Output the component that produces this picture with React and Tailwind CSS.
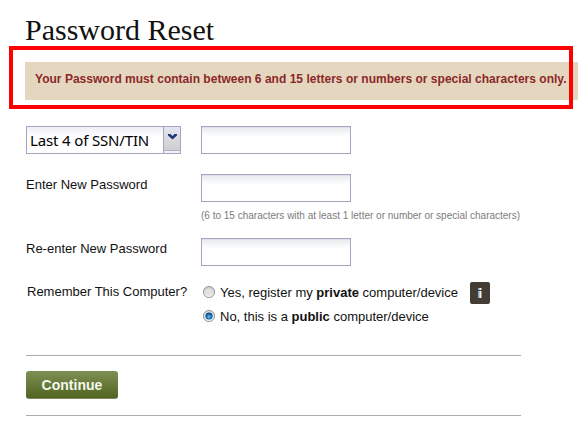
import { useState } from 'react';

const FIELD = 'block w-[150px] h-7 border border-[#a5a5c0] px-1 text-sm outline-none bg-[linear-gradient(to_bottom,#d6d8e4_0px,#eaecef_1px,#f3f4f6_5px,#ffffff_10px)]';

const DEVICES = [
  { id: 'private', before: 'Yes, register my ', after: ' computer/device' },
  { id: 'public', before: 'No, this is a ', after: ' computer/device' },
];

function Radio({ checked }) {
  return (
    <svg width="14" height="13" viewBox="0 0 14 13" className="shrink-0">
      <defs>
        <linearGradient id="ring" x1="0" y1="0" x2="0" y2="1">
          <stop offset="0" stopColor="#c4c4c4" />
          <stop offset="1" stopColor="#f7f7f7" />
        </linearGradient>
        <radialGradient id="dot" cx="0.5" cy="0.6" r="0.6">
          <stop offset="0" stopColor="#6cc4f6" />
          <stop offset="0.5" stopColor="#1d76bd" />
          <stop offset="1" stopColor="#0b2a52" />
        </radialGradient>
      </defs>
      <circle cx="7" cy="6" r="5.6" fill="url(#ring)" stroke="#8f8f8f" strokeWidth="0.9" />
      {checked ? (
        <>
          <circle cx="7" cy="6" r="4.6" fill="#e3edf6" />
          <circle cx="7" cy="6" r="3.6" fill="url(#dot)" />
        </>
      ) : (
        <circle cx="7" cy="6" r="3.6" fill="#e2e2e2" />
      )}
    </svg>
  );
}

export default function App() {
  const [device, setDevice] = useState('public');

  return (
    <div className="relative w-[578px] h-[422px] overflow-hidden bg-white text-[#111111] font-['Liberation_Sans',Arial,sans-serif]">
      <h1 className="pt-[12px] h-[62px] pl-[25px] text-[30px] leading-[36px] font-['Liberation_Serif',serif] whitespace-nowrap">
        Password Reset
      </h1>

      <div className="ml-[25px] h-[38px] pl-[10px] bg-[#e5d7bf]">
        <p className="pt-[9px] text-[12px] leading-4 tracking-[0.02px] font-bold text-[#8b2829] whitespace-nowrap">
          Your Password must contain between 6 and 15 letters or numbers or special characters only.
        </p>
      </div>
      {/* Highlight frame over the error banner */}
      <div className="absolute left-[9px] top-[46px] w-[564px] h-[63px] border-4 border-[#ff0000] pointer-events-none" />

      <div className="ml-[26px] w-[495px] pt-[26px] text-[13px] leading-4">
        <div className="flex h-12">
          <div className="w-[175px] shrink-0">
            <button className="flex w-[155px] h-7 border border-[#a5a5c0] bg-[linear-gradient(to_bottom,#eeeff3_0px,#ffffff_10px)] text-black">
              <span className="flex-1 pl-[3px] text-left text-[15px] leading-[26px] tracking-[-0.15px] whitespace-nowrap font-['Noto_Sans',sans-serif]">
                Last 4 of SSN/TIN
              </span>
              <span className="flex w-[17px] h-[26px] justify-center border-l border-[#a5a5c0] bg-[linear-gradient(to_bottom,#e4e5ef,#cfcfcf_23px,#b0b0c4_23px,#b0b0c4_24px,#f0f0f6_24px)]">
                <svg width="9" height="6" viewBox="0 0 9 6" className="mt-[7px]">
                  <path d="M0 0h2.4l2.1 2 2.1-2H9v1.4L4.5 5.4 0 1.4z" fill="#203580" />
                </svg>
              </span>
            </button>
          </div>
          <input className={FIELD} />
        </div>

        <div className="flex h-16">
          <label className="w-[175px] shrink-0 pt-[3px]">Enter New Password</label>
          <div>
            <input type="password" className={FIELD} />
            <p className="mt-1.5 text-[10px] leading-4 text-[#7c7c7c] whitespace-nowrap">
              (6 to 15 characters with at least 1 letter or number or special characters)
            </p>
          </div>
        </div>

        <div className="flex h-[42px]">
          <label className="w-[175px] shrink-0 pt-[3px]">Re-enter New Password</label>
          <input type="password" className={FIELD} />
        </div>

        <div className="flex h-[75px]">
          <span className="w-[176px] shrink-0 pl-px pt-1">Remember This Computer?</span>
          <div>
            {DEVICES.map((d) => (
              <button key={d.id} onClick={() => setDevice(d.id)} className="flex h-6 items-center whitespace-nowrap">
                <Radio checked={device === d.id} />
                <span className="ml-1 pt-[2px]">
                  {d.before}<b>{d.id}</b>{d.after}
                </span>
              </button>
            ))}
          </div>
          <div className="ml-3 mt-[2px] flex w-5 h-[22px] shrink-0 items-center justify-center rounded-[2px] bg-[#443d35]">
            <svg width="4" height="10" viewBox="0 0 4 10">
              <path d="M0.5 0h3v2h-3zM0.5 3h3v7h-3z" fill="#f3f0df" />
              <path d="M0.5 0h1.2v2H0.5zM0.5 3h1.2v7H0.5z" fill="#8fb9e6" />
            </svg>
          </div>
        </div>

        <div className="h-[61px] border-y border-[#acacac] pt-[15px]">
          <button className="block w-[92px] h-7 rounded-[3px] border-b border-[#7c8762] bg-linear-to-b from-[#7f9055] to-[#50651c] text-sm leading-[27px] tracking-[0.02px] font-bold text-[#f5f6ee]">
            <span className="block pt-px">Continue</span>
          </button>
        </div>
      </div>
    </div>
  );
}
